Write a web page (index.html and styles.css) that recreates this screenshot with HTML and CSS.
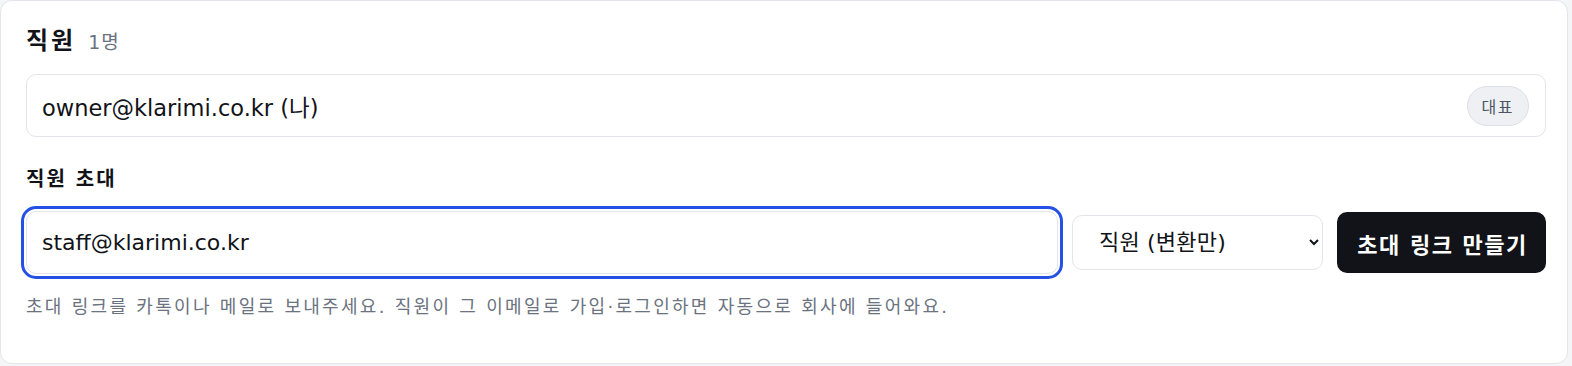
FILE: index.html
```html
<!DOCTYPE html>
<html lang="ko">
<head>
  <meta charset="utf-8">
  <title>직원</title>
  <link rel="stylesheet" href="styles.css">
</head>
<body>
  <section class="card">
    <!-- Members -->
    <div class="card-head">
      <h2 class="card-title">직원</h2>
      <span class="card-count">1명</span>
    </div>
    <div class="member-row">
      <span class="member-email">owner@klarimi.co.kr (나)</span>
      <span class="role-badge">대표</span>
    </div>

    <!-- Invite -->
    <h3 class="invite-title">직원 초대</h3>
    <div class="invite-row">
      <input type="email" class="invite-input" id="inviteEmail" value="staff@klarimi.co.kr">
      <select class="invite-role" id="inviteRole">
        <option value="staff" selected>직원 (변환만)</option>
        <option value="admin">관리자</option>
      </select>
      <button class="invite-button" id="makeLink">초대 링크 만들기</button>
    </div>
    <p class="invite-hint">초대 링크를 카톡이나 메일로 보내주세요. 직원이 그 이메일로 가입·로그인하면 자동으로 회사에 들어와요.</p>
  </section>
</body>
</html>
```

FILE: styles.css
```css
/* Page */
body {
  margin: 0;
  background-color: #f4f5f7;
  font-family: "DejaVu Sans", "Noto Sans CJK KR", sans-serif;
  color: #111318;
}

/* Card */
.card {
  width: 1520px;
  min-height: 316px;
  background: #fff;
  border: 1px solid #e3e5ea;
  border-radius: 12px;
  padding: 20px 21px 26px 25px;
}

.card-head {
  display: flex;
  align-items: baseline;
  gap: 12px;
}

.card-title {
  margin: 0;
  font-size: 24px;
  font-weight: 700;
  letter-spacing: 3px;
}

.card-count {
  font-size: 19px;
  color: #6b7280;
  letter-spacing: 1px;
}

/* Member row */
.member-row {
  display: flex;
  align-items: center;
  justify-content: space-between;
  margin-top: 18px;
  height: 61px;
  padding: 0 16px 0 15px;
  border: 1px solid #e3e5ea;
  border-radius: 10px;
}

.member-email {
  font-size: 22.5px;
}

.role-badge {
  padding: 7px 14px;
  font-size: 16px;
  letter-spacing: 1.5px;
  color: #4b5563;
  background: #eef0f4;
  border: 1px solid #dcdfe5;
  border-radius: 999px;
}

/* Invite */
.invite-title {
  margin: 26px 0 0;
  font-size: 20px;
  font-weight: 700;
  letter-spacing: 2px;
}

.invite-row {
  display: flex;
  align-items: center;
  gap: 14px;
  margin-top: 19px;
}

.invite-input {
  flex: 1;
  height: 63px;
  box-sizing: border-box;
  padding: 0 15px;
  font-family: inherit;
  font-size: 22px;
  color: #111318;
  border: 1px solid #e3e5ea;
  border-radius: 10px;
  outline: 3px solid #2450e6;
  outline-offset: 2px;
}

.invite-role {
  width: 251px;
  height: 55px;
  padding: 0 10px 0 22px;
  font-family: inherit;
  font-size: 22px;
  letter-spacing: 0.2px;
  color: #111318;
  background: #fff;
  border: 1px solid #e3e5ea;
  border-radius: 10px;
}

.invite-button {
  width: 209px;
  height: 61px;
  padding: 0 0 0 2px;
  font-family: inherit;
  font-size: 22px;
  font-weight: 700;
  letter-spacing: 1.5px;
  color: #fff;
  background: #111318;
  border: none;
  border-radius: 10px;
  cursor: pointer;
}

.invite-hint {
  margin: 18px 0 0;
  font-size: 18px;
  letter-spacing: 2.3px;
  color: #6b7280;
}
```
